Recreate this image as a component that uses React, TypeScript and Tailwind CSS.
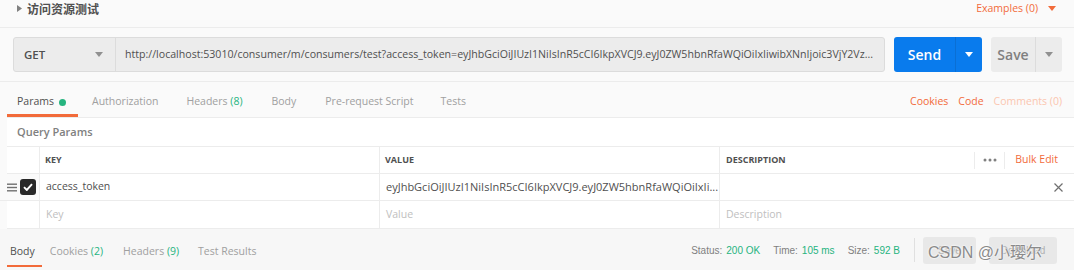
import React from "react";

const Caret = ({ className = "" }: { className?: string }) => (
  <svg width="8" height="5" viewBox="0 0 8 5" className={className}>
    <path d="M0 0 L8 0 L4 5 Z" fill="currentColor" />
  </svg>
);

export default function App() {
  const url =
    "http://localhost:53010/consumer/m/consumers/test?access_token=eyJhbGciOiJIUzI1NiIsInR5cCI6IkpXVCJ9.eyJ0ZW5hbnRfaWQiOiIxIiwibXNnIjoic3VjY2Vz...";
  return (
    <div className="w-[1074px] h-[270px] overflow-hidden bg-[#fafafa] font-['Open_Sans',sans-serif] text-[#505050] relative">
      {/* Top row */}
      <div className="h-[28px] flex items-start justify-between border-b border-[#ececec] pl-[17px] pr-[18px] pt-[0px]">
        <div className="flex items-center gap-[5px] text-[12px] text-[#505050] h-[17px]">
          <svg width="5" height="7" viewBox="0 0 5 7"><path d="M0 0 L5 3.5 L0 7 Z" fill="#808080" /></svg>
          <span className="font-['Noto_Sans_CJK_SC',sans-serif] font-semibold">访问资源测试</span>
        </div>
        <div className="flex items-center gap-[10px] text-[10.5px] text-[#f26b3a] h-[17px]">
          <span>Examples (0)</span>
          <Caret className="text-[#f26b3a]" />
        </div>
      </div>

      {/* URL row */}
      <div className="h-[54px] flex items-center pl-[13px] pr-[12px] gap-[9px] border-b border-[#ececec]">
        <div className="flex h-[35px] w-[872px] rounded-[3px] border border-[#dcdcdc] bg-[#ececec]">
          <div className="w-[102px] flex items-center justify-between pl-[10px] pr-[12px] border-r border-[#dcdcdc] text-[11.5px] font-semibold text-[#505050]">
            <span>GET</span>
            <Caret className="text-[#909090]" />
          </div>
          <div className="flex-1 flex items-center pl-[9px] pr-[8px] text-[10.6px] text-[#505050] whitespace-nowrap overflow-hidden">
            <span className="truncate">{url}</span>
          </div>
        </div>
        <div className="flex h-[35px] w-[88px] rounded-[3px] bg-[#097bed] text-white">
          <div className="flex-1 flex items-center justify-center text-[14px] font-semibold">Send</div>
          <div className="w-[27px] flex items-center justify-center border-l border-[#0a6fd4]">
            <Caret />
          </div>
        </div>
        <div className="flex h-[35px] w-[71px] rounded-[3px] bg-[#ececec] text-[#808080]">
          <div className="flex-1 flex items-center justify-center text-[14px] font-semibold">Save</div>
          <div className="w-[27px] flex items-center justify-center border-l border-[#dcdcdc]">
            <Caret className="text-[#909090]" />
          </div>
        </div>
      </div>

      {/* Tabs */}
      <div className="h-[36px] flex items-stretch justify-between ml-[7px] border-b border-[#ececec] text-[10.5px]">
        <div className="flex items-stretch">
          <div className="relative flex items-center pl-[10px] pr-[12px] pt-[5px] text-[#505050]">
            <span>Params</span>
            <span className="ml-[5px] w-[7px] h-[7px] rounded-full bg-[#26b47f]" />
            <div className="absolute left-0 right-0 bottom-[0px] h-[3px] bg-[#f26b3a]" />
          </div>
          <div className="flex items-center px-[14px] pt-[5px] text-[#a0a0a0]">Authorization</div>
          <div className="flex items-center px-[14px] pt-[5px] text-[#a0a0a0]">
            Headers&nbsp;<span className="text-[#26b47f]">(8)</span>
          </div>
          <div className="flex items-center px-[15px] pt-[5px] text-[#a0a0a0]">Body</div>
          <div className="flex items-center px-[14px] pt-[5px] text-[#a0a0a0]">Pre-request Script</div>
          <div className="flex items-center px-[13px] pt-[5px] text-[#a0a0a0]">Tests</div>
        </div>
        <div className="flex items-center gap-[10px] pr-[12px] pt-[5px]">
          <span className="text-[#f26b3a]">Cookies</span>
          <span className="text-[#f26b3a]">Code</span>
          <span className="text-[#fbc6b0]">Comments (0)</span>
        </div>
      </div>

      {/* Query Params */}
      <div className="ml-[7px] bg-white">
        <div className="h-[29px] flex items-center pl-[10px] text-[11px] font-semibold text-[#808080] border-b border-[#ececec]">
          Query Params
        </div>
        <div className="grid grid-cols-[32px_340px_340px_1fr] text-[10.5px]">
          {/* header */}
          <div className="h-[27px] border-b border-[#ececec]" />
          <div className="h-[27px] flex items-center pl-[5px] border-l border-b border-[#ececec] text-[9px] font-bold text-[#505050]">KEY</div>
          <div className="h-[27px] flex items-center pl-[5px] border-l border-b border-[#ececec] text-[9px] font-bold text-[#505050]">VALUE</div>
          <div className="h-[27px] flex items-center border-l border-b border-[#ececec]">
            <span className="flex-1 pl-[6px] text-[9px] font-bold text-[#505050]">DESCRIPTION</span>
            <div className="h-[17px] w-[31px] flex items-center justify-center border-l border-r border-[#ececec] text-[#808080]">
              <svg width="14" height="4" viewBox="0 0 14 4">
                <circle cx="2" cy="2" r="1.5" fill="currentColor" />
                <circle cx="7" cy="2" r="1.5" fill="currentColor" />
                <circle cx="12" cy="2" r="1.5" fill="currentColor" />
              </svg>
            </div>
            <span className="pl-[10px] pr-[16px] text-[10.5px] text-[#f26b3a]">Bulk Edit</span>
          </div>

          {/* row 1 */}
          <div className="h-[27px] flex items-center border-b border-[#ececec] -ml-[7px] bg-[#fafafa]">
            <svg width="10" height="9" viewBox="0 0 10 9" className="ml-[7px]">
              <rect x="0" y="0.5" width="10" height="1.4" fill="#707070" />
              <rect x="0" y="3.8" width="10" height="1.4" fill="#707070" />
              <rect x="0" y="7.1" width="10" height="1.4" fill="#707070" />
            </svg>
            <div className="ml-[3px] w-[16px] h-[16px] rounded-[3px] bg-[#282828] flex items-center justify-center">
              <svg width="10" height="8" viewBox="0 0 10 8">
                <path d="M1 4.2 L3.8 7 L9 1.2" stroke="white" strokeWidth="1.9" fill="none" />
              </svg>
            </div>
          </div>
          <div className="h-[27px] flex items-center pl-[6px] border-l border-b border-[#ececec] text-[#505050]">access_token</div>
          <div className="h-[27px] flex items-center pl-[6px] border-l border-b border-[#ececec] text-[11px] text-[#505050] whitespace-nowrap overflow-hidden">
            eyJhbGciOiJIUzI1NiIsInR5cCI6IkpXVCJ9.eyJ0ZW5hbnRfaWQiOiIxIi...
          </div>
          <div className="h-[27px] flex items-center justify-end pr-[11px] border-l border-b border-[#ececec] text-[#707070]">
            <svg width="9" height="9" viewBox="0 0 9 9">
              <path d="M0.5 0.5 L8.5 8.5 M8.5 0.5 L0.5 8.5" stroke="currentColor" strokeWidth="1.2" />
            </svg>
          </div>

          {/* row 2 */}
          <div className="h-[28px] border-b border-[#ececec]" />
          <div className="h-[28px] flex items-center pl-[6px] border-l border-b border-[#ececec] text-[#c0c0c0]">Key</div>
          <div className="h-[28px] flex items-center pl-[6px] border-l border-b border-[#ececec] text-[#c0c0c0]">Value</div>
          <div className="h-[28px] flex items-center pl-[6px] border-l border-b border-[#ececec] text-[#c0c0c0]">Description</div>
        </div>
      </div>

      {/* Response bar */}
      <div className="h-[42px] flex items-stretch justify-between bg-[#f7f7f7]">
        <div className="flex items-stretch text-[10.5px] ml-[7px] pt-[3px]">
          <div className="relative flex items-center pl-[3px] pr-[7px] text-[#505050]">
            Body
            <div className="absolute left-0 right-0 bottom-[4px] h-[2px] bg-[#f26b3a]" />
          </div>
          <div className="flex items-center pl-[8px] pr-[10px] text-[#a0a0a0]">
            Cookies&nbsp;<span className="text-[#26b47f]">(2)</span>
          </div>
          <div className="flex items-center px-[10px] text-[#a0a0a0]">
            Headers&nbsp;<span className="text-[#26b47f]">(9)</span>
          </div>
          <div className="flex items-center px-[9px] text-[#a0a0a0]">Test Results</div>
        </div>
        <div className="flex items-center font-['Liberation_Sans',sans-serif] text-[10px] pr-[17px]">
          <span className="text-[#808080]">Status:</span>
          <span className="ml-[4px] text-[#26b47f]">200 OK</span>
          <span className="ml-[13px] text-[#808080]">Time:</span>
          <span className="ml-[4px] text-[#26b47f]">105 ms</span>
          <span className="ml-[13px] text-[#808080]">Size:</span>
          <span className="ml-[4px] text-[#26b47f]">592 B</span>
          <div className="ml-[14px] h-[24px] w-px bg-[#e0e0e0]" />
          <div className="ml-[8px] h-[27px] w-[53px] rounded-[3px] bg-[#e8e8e8] flex items-center justify-center text-[#b0b0b0]">Save</div>
          <div className="ml-[13px] h-[27px] w-[68px] rounded-[3px] bg-[#e8e8e8] flex items-center justify-center text-[#b0b0b0]">Download</div>
        </div>
      </div>

      {/* watermark */}
      <div className="absolute left-[928px] top-[241px] font-['Liberation_Sans','Noto_Sans_CJK_SC',sans-serif] text-[16px] text-[#8a8a8a] [text-shadow:0_0_2px_white,0_0_2px_white] whitespace-nowrap">
        CSDN @小璎尔
      </div>
    </div>
  );
}
